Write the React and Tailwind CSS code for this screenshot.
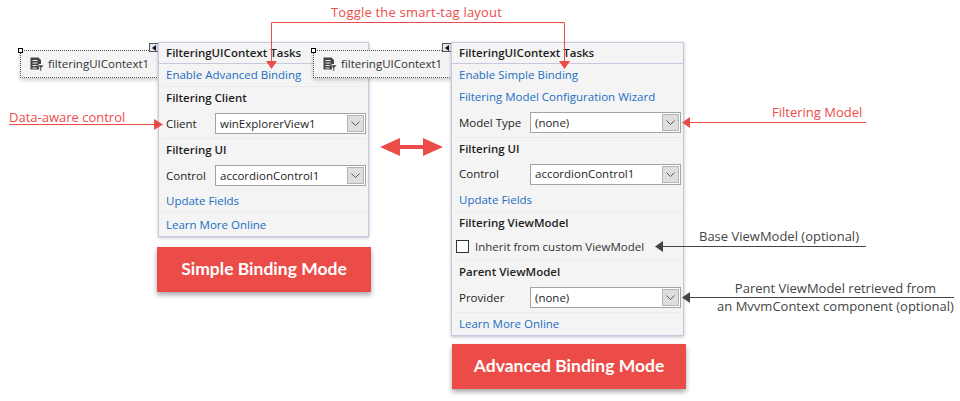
const Combo = ({ value }) => (
  <div className="flex h-[21px] flex-1 items-center justify-between border border-[#a3a3a3] bg-white pl-1 pr-[1px]">
    <span className="text-[11.5px] text-[#1e1e1e]">{value}</span>
    <span className="flex h-[17px] w-[17px] items-center justify-center border border-[#b4b4b4] bg-[#dedede]">
      <svg width="9" height="5" viewBox="0 0 9 5" fill="none" stroke="#555" strokeWidth="1">
        <path d="M.5.5l4 4 4-4" />
      </svg>
    </span>
  </div>
);

const LinkRow = ({ children, h, sep }) => (
  <div className={`${h} ${sep ? "border-b border-[#ebebeb]" : ""} mx-[2px] flex items-center px-[5px] text-[11.5px] text-[#1b6ec2]`}>
    {children}
  </div>
);

const Heading = ({ children, h = "h-[22px]" }) => (
  <div className={`${h} mx-[2px] flex items-center px-[5px] text-[11.5px] font-semibold text-[#1e1e1e]`}>{children}</div>
);

const ComboRow = ({ label, value, labelWidth, sep, h }) => (
  <div className={`${h} ${sep ? "border-b border-[#ebebeb]" : ""} mx-[2px] flex items-center pl-[5px]`}>
    <span className={`${labelWidth} text-[11.5px] text-[#1e1e1e]`}>{label}</span>
    <Combo value={value} />
  </div>
);

const PanelTitle = () => (
  <div className="flex h-[21px] items-center border-b border-[#c8c8dc] px-[7px] text-[11.5px] font-semibold text-[#1e1e1e]">
    FilteringUIContext Tasks
  </div>
);

// component tray item with its selection handle and smart-tag glyph
const Tray = () => (
  <div className="absolute -left-[138px] top-[8px] flex h-[28px] w-[139px] items-center gap-[4px] border border-dotted border-[#555] bg-[#f4f4f4] pl-[9px] shadow-[0_2px_4px_rgba(0,0,0,0.2)]">
    <svg width="14" height="14" viewBox="0 0 14 14" className="shrink-0">
      <path d="M.5.5h8l2.500 2.500v4H9v5.500H.5z" fill="#444" />
      <path d="M2.500 3.500h5M2.500 6h5M2.500 8.500h4M2.500 11h4" stroke="#f4f4f4" strokeWidth="1" />
      <path d="M7.500 8h6.500l-2.500 2.800V14h-1.500v-3.200z" fill="#444" stroke="#f4f4f4" strokeWidth=".5" />
    </svg>
    <span className="text-[11.5px] text-[#333]">filteringUIContext1</span>
    <span className="absolute -left-[3px] -top-[3px] h-[5px] w-[5px] border border-black bg-white" />
    <span className="absolute left-[128px] -top-[8px] flex h-[9px] w-[10px] items-center justify-center border border-[#555] bg-[#dfe7f3]">
      <svg width="4" height="6" viewBox="0 0 4 6"><path d="M4 0v6L0 3z" fill="#111" /></svg>
    </span>
  </div>
);

const Banner = ({ children, className }) => (
  <div className={`flex h-[45px] items-center justify-center bg-[#ec4c47] font-['Lato',sans-serif] text-[17.5px] font-bold text-white shadow-[0_3px_5px_rgba(0,0,0,0.35)] ${className}`}>
    {children}
  </div>
);

const Note = ({ children, className }) => (
  <div className={`absolute whitespace-nowrap text-[13px] leading-[18px] ${className}`}>{children}</div>
);

export default function App() {
  return (
    <div className="relative flex h-[401px] w-[960px] items-start gap-[80px] overflow-hidden bg-white pl-[157px] pt-[42px] font-['Open_Sans','Noto_Sans',sans-serif]">
      {/* simple binding column */}
      <div className="flex w-[214px] flex-col">
        <div className="relative ml-[1px] w-[211px]">
          <Tray />
          <div className="relative border border-[#c8c8dc] bg-[#f4f4f4] shadow-[0_1px_3px_rgba(90,90,130,0.4)]">
            <PanelTitle />
            <LinkRow h="h-[23px]" sep>Enable Advanced Binding</LinkRow>
            <Heading>Filtering Client</Heading>
            <ComboRow label="Client" value="winExplorerView1" labelWidth="w-[49px]" h="h-[30px]" sep />
            <Heading>Filtering UI</Heading>
            <ComboRow label="Control" value="accordionControl1" labelWidth="w-[49px]" h="h-[29px]" />
            <LinkRow h="h-[23px]" sep>Update Fields</LinkRow>
            <LinkRow h="h-[23px]">Learn More Online</LinkRow>
          </div>
        </div>
        <Banner className="mt-[10px] w-[214px]">Simple Binding Mode</Banner>
      </div>

      {/* advanced binding column */}
      <div className="flex w-[235px] flex-col">
        <div className="relative w-[233px]">
          <Tray />
          <div className="relative border border-[#c8c8dc] bg-[#f4f4f4] shadow-[0_1px_3px_rgba(90,90,130,0.4)]">
            <PanelTitle />
            <LinkRow h="h-[22px]">Enable Simple Binding</LinkRow>
            <LinkRow h="h-[22px]">Filtering Model Configuration Wizard</LinkRow>
            <ComboRow label="Model Type" value="(none)" labelWidth="w-[71px]" h="h-[30px]" sep />
            <Heading>Filtering UI</Heading>
            <ComboRow label="Control" value="accordionControl1" labelWidth="w-[71px]" h="h-[28px]" />
            <LinkRow h="h-[24px]" sep>Update Fields</LinkRow>
            <Heading>Filtering ViewModel</Heading>
            <div className="mx-[2px] flex h-[27px] items-center gap-[6px] border-b border-[#ebebeb] pb-[1px] pl-[2px]">
              <span className="h-[13px] w-[13px] border border-[#333] bg-white" />
              <span className="text-[11.5px] text-[#333]">Inherit from custom ViewModel</span>
            </div>
            <Heading>Parent ViewModel</Heading>
            <ComboRow label="Provider" value="(none)" labelWidth="w-[71px]" h="h-[30px]" sep />
            <LinkRow h="h-[22px]">Learn More Online</LinkRow>
          </div>
        </div>
        <Banner className="ml-[1px] mt-[8px] w-[234px]">Advanced Binding Mode</Banner>
      </div>

      {/* callout arrows */}
      <svg className="pointer-events-none absolute left-0 top-0" width="960" height="401" viewBox="0 0 960 401">
        <g fill="none" stroke="#ec4c47" strokeWidth="1">
          <path d="M271.500 62V22.500H564.500V62" />
          <path d="M9 124.500H156" />
          <path d="M866 122.500H690" />
        </g>
        <g fill="#ec4c47">
          <path d="M266 61h11l-5.500 8z" />
          <path d="M559 61h11l-5.500 8z" />
          <path d="M154 119v11l9-5.500z" />
          <path d="M690 117v11l-8-5.500z" />
          <path d="M380 147l20-9v7h23v-7l20 9-20 9v-7h-23v7z" />
        </g>
        <g fill="none" stroke="#444" strokeWidth="1">
          <path d="M866 246.500H662" />
          <path d="M954 297.500H690" />
        </g>
        <g fill="#444">
          <path d="M663 241v11l-8-5.500z" />
          <path d="M690 292v11l-8-5.500z" />
        </g>
      </svg>

      <Note className="left-[331px] top-[3px] tracking-[0.2px] text-[#ee4b4b]">Toggle the smart-tag layout</Note>
      <Note className="left-[9px] top-[108px] text-[#ee4b4b]">Data-aware control</Note>
      <Note className="left-[772px] top-[103px] text-[#ee4b4b]">Filtering Model</Note>
      <Note className="left-[699px] top-[227px] text-[#444]">Base ViewModel (optional)</Note>
      <Note className="left-[715px] top-[279px] w-[241px] text-center text-[#444]">
        Parent ViewModel retrieved from
        <br />
        an MvvmContext component (optional)
      </Note>
    </div>
  );
}
